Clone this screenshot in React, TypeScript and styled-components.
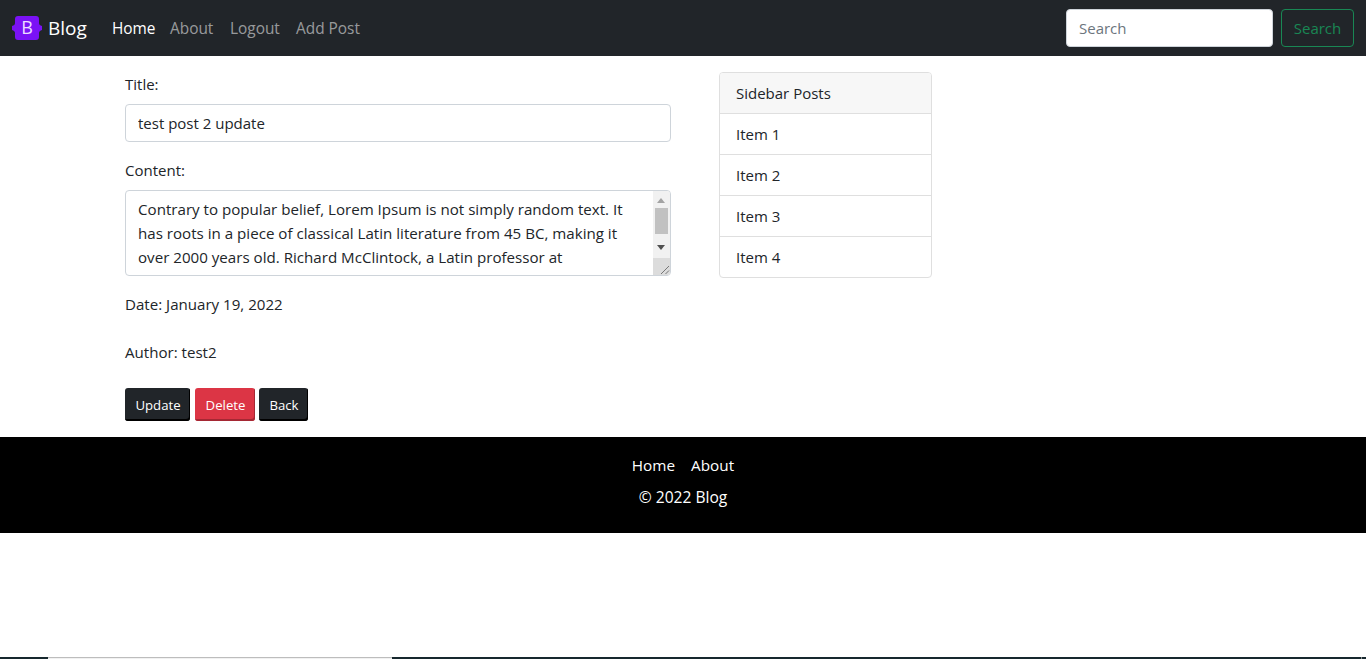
import React from "react";
import styled, { createGlobalStyle } from "styled-components";

const Global = createGlobalStyle`
  html, body { margin: 0; padding: 0; height: 100%; overflow: hidden; background: #fff; }
  body { font-family: "Open Sans", "Noto Sans", sans-serif; font-size: 15px; line-height: 24px; color: #212529; }
  * { box-sizing: border-box; }
`;

const Page = styled.div`
  height: 659px;
  display: flex;
  flex-direction: column;
`;

const Navbar = styled.nav`
  height: 56px;
  flex: none;
  background: #212529;
  display: flex;
  align-items: center;
  padding: 0 12px;
`;

const Brand = styled.a`
  display: flex;
  align-items: center;
  gap: 6px;
  color: #fff;
  font-size: 19px;
  margin-right: 16px;
  width: 76px;
`;

const NavLink = styled.a<{ $active?: boolean; $w: number }>`
  width: ${(p) => p.$w}px;
  font-size: 15.4px;
  color: ${(p) => (p.$active ? "#fff" : "rgba(255,255,255,.55)")};
  padding: 2px 8px 0;
  white-space: nowrap;
`;

const SearchForm = styled.form`
  margin-left: auto;
  display: flex;
  gap: 8px;
`;

const SearchInput = styled.input`
  width: 207px;
  height: 38px;
  border: 1px solid #ced4da;
  border-radius: 4px;
  padding: 0 12px;
  font: inherit;
  color: #212529;
  background: #fff;
  &::placeholder { color: #6c757d; opacity: 1; }
`;

const SearchButton = styled.button`
  width: 73px;
  height: 38px;
  background: transparent;
  border: 1px solid #198754;
  border-radius: 4px;
  color: #198754;
  font: inherit;
  padding: 0;
`;

const Main = styled.main`
  flex: none;
  display: flex;
  align-items: flex-start;
  padding: 16px 0 16px 125px;
  gap: 48px;
`;

const PostForm = styled.div`
  width: 546px;
  display: flex;
  flex-direction: column;
`;

const Label = styled.div`
  height: 24px;
  margin-bottom: 8px;
`;

const TitleInput = styled.input`
  width: 100%;
  height: 38px;
  border: 1px solid #ced4da;
  border-radius: 4px;
  padding: 0 12px;
  font: inherit;
  color: #212529;
  margin-bottom: 16px;
`;

const ContentBox = styled.div`
  position: relative;
  height: 86px;
  border: 1px solid #ced4da;
  border-radius: 4px;
  padding: 6px 40px 0 12px;
  overflow: hidden;
  margin-bottom: 16px;
`;

const ContentText = styled.div`
  font-size: 15.13px;
`;

const Scrollbar = styled.div`
  position: absolute;
  top: 0;
  right: 0;
  bottom: 0;
  width: 17px;
  background: #f1f1f1;
`;

const ScrollThumb = styled.div`
  position: absolute;
  top: 17px;
  left: 2px;
  width: 13px;
  height: 26px;
  background: #c1c1c1;
`;

const ArrowSvg = styled.svg<{ $bottom?: boolean }>`
  position: absolute;
  left: 4px;
  width: 8px;
  height: 5px;
  ${(p) => (p.$bottom ? "top: 54px;" : "top: 7px;")}
`;

const Resizer = styled.svg`
  position: absolute;
  right: 0;
  bottom: 0;
  width: 17px;
  height: 17px;
  background: #dcdcdc;
`;

const Meta = styled.p`
  margin: 0 0 24px;
  height: 24px;
  font-size: 15.1px;
`;

const Buttons = styled.div`
  display: flex;
  gap: 4px;
`;

const ActionButton = styled.button<{ $danger?: boolean; $w: number }>`
  width: ${(p) => p.$w}px;
  height: 33px;
  margin-left: ${(p) => (p.$danger ? "1px" : "0")};
  border: none;
  border-radius: 3px;
  background: ${(p) => (p.$danger ? "#dc3545" : "#212529")};
  box-shadow: inset -1px -2px 0 ${(p) => (p.$danger ? "#a52834" : "#000")};
  color: #fff;
  font: inherit;
  font-size: 13.2px;
  padding: 0 0 0 1px;
`;

const Sidebar = styled.aside`
  width: 213px;
  border: 1px solid #dfdfdf;
  border-radius: 4px;
  overflow: hidden;
`;

const SidebarHead = styled.div`
  height: 40px;
  background: #f7f7f7;
  padding: 8px 16px;
`;

const SidebarItem = styled.div`
  height: 41px;
  border-top: 1px solid #dfdfdf;
  padding: 8px 16px;
`;

const Footer = styled.footer`
  flex: none;
  height: 96px;
  background: #000;
  color: #fff;
  text-align: center;
  padding-top: 16px;
`;

const FooterLinks = styled.div`
  display: flex;
  justify-content: center;
  gap: 16px;
  height: 32px;
  font-size: 15.3px;
`;

const Copyright = styled.div`
  font-size: 15.6px;
`;

const Spacer = styled.div`
  flex: 1;
`;

const BottomStrip = styled.div`
  flex: none;
  height: 2px;
  background: #17282e;
  padding-left: 48px;
  display: flex;
`;

const StripThumb = styled.div`
  width: 344px;
  height: 2px;
  background: #f1f1f1;
  border-top: 1px solid #bdbdbd;
`;

const StripTick = styled.div`
  width: 1px;
  height: 2px;
  margin: 0 4px 0 auto;
  background: #8a8f91;
`;

const Logo = () => (
  <svg width="30" height="24" viewBox="0 0 30 24">
    <path
      fill="#7a12f5"
      d="M6 0h18a3 3 0 0 1 3 3v4c0 1.500 1 2.500 3 3v4c-2 .5-3 1.500-3 3v4a3 3 0 0 1-3 3H6a3 3 0 0 1-3-3v-4c0-1.500-1-2.500-3-3v-4c2-.5 3-1.500 3-3V3a3 3 0 0 1 3-3z"
    />
    <text x="15" y="18" textAnchor="middle" fontSize="18" fill="#ecdfff" fontFamily="Open Sans, sans-serif">
      B
    </text>
  </svg>
);

export default function App() {
  return (
    <Page>
      <Global />
      <Navbar>
        <Brand>
          <Logo />
          Blog
        </Brand>
        <NavLink $active $w={58}>Home</NavLink>
        <NavLink $w={60}>About</NavLink>
        <NavLink $w={66}>Logout</NavLink>
        <NavLink $w={79}>Add Post</NavLink>
        <SearchForm>
          <SearchInput placeholder="Search" />
          <SearchButton type="button">Search</SearchButton>
        </SearchForm>
      </Navbar>
      <Main>
        <PostForm>
          <Label>Title:</Label>
          <TitleInput defaultValue="test post 2 update" />
          <Label>Content:</Label>
          <ContentBox>
            <ContentText>
              Contrary to popular belief, Lorem Ipsum is not simply random text. It has roots in a piece of classical
              Latin literature from 45 BC, making it over 2000 years old. Richard McClintock, a Latin professor at
            </ContentText>
            <Scrollbar>
              <ArrowSvg viewBox="0 0 8 5">
                <path d="M4 0l4 5H0z" fill="#a3a3a3" />
              </ArrowSvg>
              <ScrollThumb />
              <ArrowSvg $bottom viewBox="0 0 8 5">
                <path d="M0 0h8L4 5z" fill="#505050" />
              </ArrowSvg>
            </Scrollbar>
            <Resizer viewBox="0 0 17 17">
              <path d="M16 8L8 16M16 12.500L12.500 16" stroke="#777" strokeWidth="1" fill="none" />
            </Resizer>
          </ContentBox>
          <Meta>Date: January 19, 2022</Meta>
          <Meta>Author: test2</Meta>
          <Buttons>
            <ActionButton $w={65}>Update</ActionButton>
            <ActionButton $w={60} $danger>
              Delete
            </ActionButton>
            <ActionButton $w={49}>Back</ActionButton>
          </Buttons>
        </PostForm>
        <Sidebar>
          <SidebarHead>Sidebar Posts</SidebarHead>
          <SidebarItem>Item 1</SidebarItem>
          <SidebarItem>Item 2</SidebarItem>
          <SidebarItem>Item 3</SidebarItem>
          <SidebarItem>Item 4</SidebarItem>
        </Sidebar>
      </Main>
      <Footer>
        <FooterLinks>
          <span>Home</span>
          <span>About</span>
        </FooterLinks>
        <Copyright>© 2022 Blog</Copyright>
      </Footer>
      <Spacer />
      <BottomStrip>
        <StripThumb />
        <StripTick />
      </BottomStrip>
    </Page>
  );
}
